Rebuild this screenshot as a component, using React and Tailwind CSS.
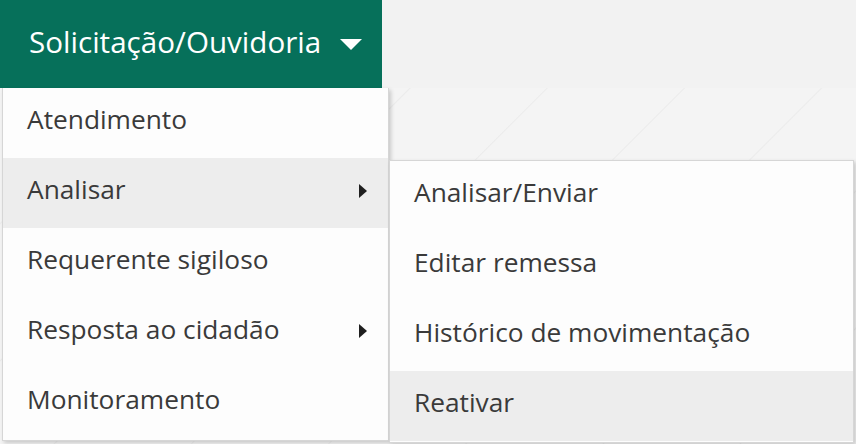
import React from "react";

const font = { fontFamily: '"Open Sans", "Noto Sans", sans-serif' };

function RightArrow() {
  return (
    <svg width="9" height="14" viewBox="0 0 9 14" className="shrink-0 mt-[2px]">
      <path d="M1 0 L9 7 L1 14 Z" fill="#1f1f1f" />
    </svg>
  );
}

function Item({ label, active, arrow, children }) {
  return (
    <div
      className={`relative flex h-[70px] items-center justify-between pb-[7px] pl-6 pr-[21px] ${
        active ? "bg-[#ededed]" : ""
      }`}
    >
      <span className="text-[26.3px] leading-none text-[#3a3a3a]">{label}</span>
      {arrow && <RightArrow />}
      {children}
    </div>
  );
}

export default function App() {
  return (
    <div
      className="relative h-[444px] w-[856px] overflow-hidden bg-[#f2f2f2]"
      style={font}
    >
      <div className="flex h-[88px]">
        <div className="flex w-[382px] items-center gap-[19px] bg-[#06705a] pb-[5px] pl-[29px]">
          <span className="text-[29.6px] leading-none text-white">
            Solicitação/Ouvidoria
          </span>
          <svg width="22" height="11" viewBox="0 0 22 11" className="mt-[6px]">
            <path d="M0 0 H22 L11 11 Z" fill="#ffffff" />
          </svg>
        </div>
        <div className="flex-1 bg-[#f2f2f2]" />
      </div>
      <div className="h-[356px] bg-[repeating-linear-gradient(135deg,#f4f4f4_0px,#f4f4f4_95px,#ebebeb_96px,#f4f4f4_97px)]" />

      <div className="absolute left-[2px] top-[88px] w-[387px] border border-t-0 border-[#d6d6d6] bg-[#fdfdfd] pb-[2px] shadow-[2px_2px_4px_rgba(0,0,0,0.18)]">
        <Item label="Atendimento" />
        <Item label="Analisar" active arrow>
          <div className="absolute left-[386px] top-[2px] w-[465px] border border-[#d6d6d6] bg-[#fdfdfd] pb-[1px] shadow-[2px_2px_4px_rgba(0,0,0,0.18)]">
            <Item label="Analisar/Enviar" />
            <Item label="Editar remessa" />
            <Item label="Histórico de movimentação" />
            <Item label="Reativar" active />
          </div>
        </Item>
        <Item label="Requerente sigiloso" />
        <Item label="Resposta ao cidadão" arrow />
        <Item label="Monitoramento" />
      </div>
    </div>
  );
}
